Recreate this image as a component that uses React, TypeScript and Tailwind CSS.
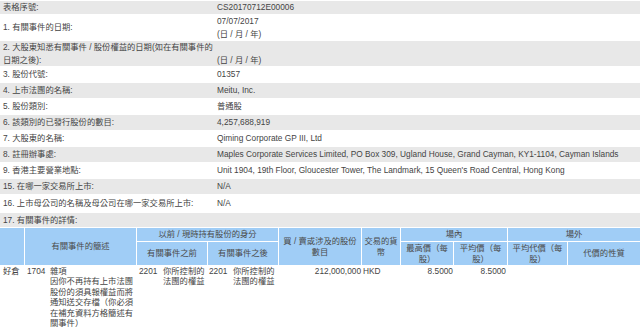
import React from "react";

type Row = {
  label: React.ReactNode;
  value: React.ReactNode;
  gray: boolean;
  h: string;
};

const rows: Row[] = [
  { label: "表格序號:", value: "CS20170712E00006", gray: true, h: "h-[13px]" },
  {
    label: "1. 有關事件的日期:",
    value: (
      <>
        07/07/2017
        <br />
        (日 / 月 / 年)
      </>
    ),
    gray: false,
    h: "h-[25px]",
  },
  {
    label: (
      <>
        2. 大股東知悉有關事件 / 股份權益的日期(如在有關事件的
        <br />
        日期之後):
      </>
    ),
    value: (
      <>
        &nbsp;
        <br />
        (日 / 月 / 年)
      </>
    ),
    gray: true,
    h: "h-[25px]",
  },
  { label: "3. 股份代號:", value: "01357", gray: false, h: "h-[15px]" },
  { label: "4. 上市法團的名稱:", value: "Meitu, Inc.", gray: true, h: "h-[15px]" },
  { label: "5. 股份類別:", value: "普通股", gray: false, h: "h-[15px]" },
  { label: "6. 該類別的已發行股份的數目:", value: "4,257,688,919", gray: true, h: "h-[15px]" },
  { label: "7. 大股東的名稱:", value: "Qiming Corporate GP III, Ltd", gray: false, h: "h-[15px]" },
  {
    label: "8. 註冊辦事處:",
    value: "Maples Corporate Services Limited, PO Box 309, Ugland House, Grand Cayman, KY1-1104, Cayman Islands",
    gray: true,
    h: "h-[15px]",
  },
  {
    label: "9. 香港主要營業地點:",
    value: "Unit 1904, 19th Floor, Gloucester Tower, The Landmark, 15 Queen's Road Central, Hong Kong",
    gray: false,
    h: "h-[15px]",
  },
  { label: "15. 在哪一家交易所上市:", value: "N/A", gray: true, h: "h-[15px]" },
  { label: "16. 上市母公司的名稱及母公司在哪一家交易所上市:", value: "N/A", gray: false, h: "h-[17px]" },
];

const head = "bg-[#a0cdf6] text-[#4a4a4a] flex items-center justify-center text-center leading-[10.4px]";

export default function App() {
  return (
    <div className="w-[640px] h-[327px] overflow-hidden bg-white text-[#444] text-[8.3px] font-['Liberation_Sans','Noto_Sans_CJK_TC',sans-serif]">
      {/* form summary rows */}
      <div className="flex flex-col gap-px pt-px leading-[12.5px]">
        {rows.map((r, i) => (
          <div
            key={i}
            className={`grid grid-cols-[215px_1fr] items-center whitespace-nowrap ${r.h} ${r.gray ? "bg-[#e8e8e8]" : "bg-white"}`}
          >
            <div className="pl-[3px]">{r.label}</div>
            <div className="pl-[2px]">{r.value}</div>
          </div>
        ))}
        <div className="h-[14px] bg-[#e8e8e8] flex items-center pl-[3px]">17. 有關事件的詳情:</div>
      </div>

      {/* details table */}
      <div className="grid grid-cols-[24px_111px_70px_70px_82px_38px_52px_53px_59px_1fr] grid-rows-[13px_23px_auto] gap-px mt-px whitespace-nowrap">
        <div className={`${head} row-span-2`}></div>
        <div className={`${head} row-span-2`}>有關事件的簡述</div>
        <div className={`${head} col-span-2`}>以前 / 現時持有股份的身分</div>
        <div className={`${head} row-span-2`}>
          買 / 賣或涉及的股份
          <br />
          數目
        </div>
        <div className={`${head} row-span-2`}>
          交易的貨
          <br />
          幣
        </div>
        <div className={`${head} col-span-2`}>場內</div>
        <div className={`${head} col-span-2`}>場外</div>
        <div className={head}>有關事件之前</div>
        <div className={head}>有關事件之後</div>
        <div className={head}>
          最高價（每
          <br />
          股）
        </div>
        <div className={head}>
          平均價（每
          <br />
          股）
        </div>
        <div className={head}>
          平均代價（每
          <br />
          股）
        </div>
        <div className={head}>代價的性質</div>

        {/* data row */}
        <div className="leading-[10.4px] pl-[3px]">好倉</div>
        <div className="leading-[10.4px] flex">
          <span className="w-[25px] pl-[2px]">1704</span>
          <span>
            雜項
            <br />
            因你不再持有上市法團
            <br />
            股份的須具報權益而將
            <br />
            通知送交存檔（你必須
            <br />
            在補充資料方格簡述有
            <br />
            關事件）
          </span>
        </div>
        <div className="leading-[10.4px] flex">
          <span className="w-[26px] pl-[2px]">2201</span>
          <span>
            你所控制的
            <br />
            法團的權益
          </span>
        </div>
        <div className="leading-[10.4px] flex">
          <span className="w-[25px] pl-[1px]">2201</span>
          <span>
            你所控制的
            <br />
            法團的權益
          </span>
        </div>
        <div className="leading-[10.4px] text-right">212,000,000</div>
        <div className="leading-[10.4px] pl-[1px]">HKD</div>
        <div className="leading-[10.4px] text-right">8.5000</div>
        <div className="leading-[10.4px] text-right pr-[1px]">8.5000</div>
        <div></div>
        <div></div>
      </div>
    </div>
  );
}
